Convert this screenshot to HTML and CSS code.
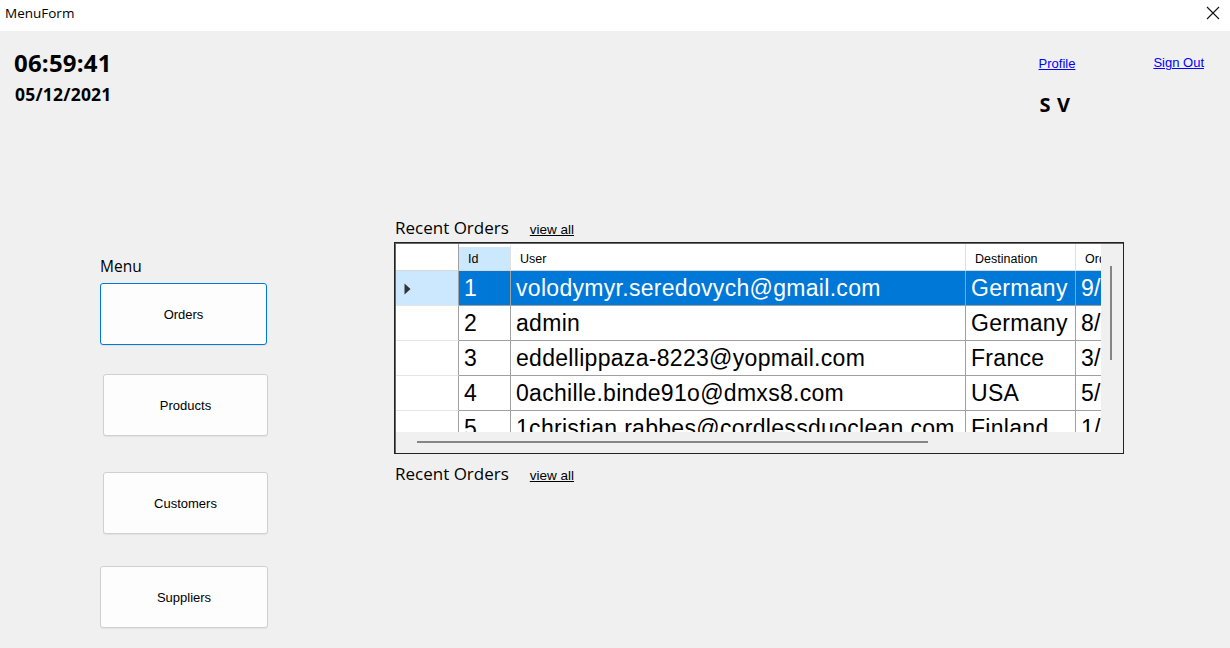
FILE: index.html
```html
<!DOCTYPE html>
<html>
<head>
<meta charset="utf-8">
<link rel="stylesheet" href="styles.css">
</head>
<body>
<div class="window">
  <div class="titlebar">
    <span class="title">MenuForm</span>
    <svg class="close" width="14" height="14" viewBox="0 0 14 14"><path d="M1 1L13 13M13 1L1 13" stroke="#111" stroke-width="1.1" fill="none"/></svg>
  </div>
  <div class="content">
    <div class="top">
      <div class="clock">
        <div class="time">06:59:41</div>
        <div class="date">05/12/2021</div>
      </div>
      <div class="user">
        <div class="profile-col">
          <a class="link" href="#">Profile</a>
          <div class="initials">S V</div>
        </div>
        <a class="link signout" href="#">Sign Out</a>
      </div>
    </div>
    <div class="body">
      <div class="menu">
        <div class="menu-label">Menu</div>
        <button class="btn btn-focus">Orders</button>
        <button class="btn b2">Products</button>
        <button class="btn b3">Customers</button>
        <button class="btn b4">Suppliers</button>
      </div>
      <div class="orders">
        <div class="section-head">
          <span class="section-title">Recent Orders</span>
          <a class="viewall" href="#">view all</a>
        </div>
        <div class="grid">
          <div class="grid-inner">
            <div class="table">
              <div class="row head">
                <div class="c rh"></div>
                <div class="c id sel-head">Id</div>
                <div class="c usr">User</div>
                <div class="c dest">Destination</div>
                <div class="c ord">Order</div>
              </div>
              <div class="row data selected">
                <div class="c rh rh-sel"><svg width="7" height="12" viewBox="0 0 7 12"><path d="M0.5 0.5L6.5 6L0.5 11.5Z" fill="#333"/></svg></div>
                <div class="c id">1</div>
                <div class="c usr">volodymyr.seredovych@gmail.com</div>
                <div class="c dest">Germany</div>
                <div class="c ord">9/12/2021</div>
              </div>
              <div class="row data">
                <div class="c rh"></div>
                <div class="c id">2</div>
                <div class="c usr">admin</div>
                <div class="c dest">Germany</div>
                <div class="c ord">8/12/2021</div>
              </div>
              <div class="row data">
                <div class="c rh"></div>
                <div class="c id">3</div>
                <div class="c usr">eddellippaza-8223@yopmail.com</div>
                <div class="c dest">France</div>
                <div class="c ord">3/12/2021</div>
              </div>
              <div class="row data">
                <div class="c rh"></div>
                <div class="c id">4</div>
                <div class="c usr">0achille.binde91o@dmxs8.com</div>
                <div class="c dest">USA</div>
                <div class="c ord">5/12/2021</div>
              </div>
              <div class="row data">
                <div class="c rh"></div>
                <div class="c id">5</div>
                <div class="c usr">1christian.rabbes@cordlessduoclean.com</div>
                <div class="c dest">Finland</div>
                <div class="c ord">1/12/2021</div>
              </div>
            </div>
            <div class="vscroll"><div class="vthumb"></div></div>
          </div>
          <div class="hscroll"><div class="hthumb"></div></div>
        </div>
        <div class="section-head second">
          <span class="section-title">Recent Orders</span>
          <a class="viewall" href="#">view all</a>
        </div>
      </div>
    </div>
  </div>
</div>
</body>
</html>
```

FILE: styles.css
```css
* { box-sizing: border-box; }
html, body { margin: 0; padding: 0; }
body { width: 1230px; height: 648px; overflow: hidden; background: #f0f0f0; }
.window { width: 1230px; height: 648px; display: flex; flex-direction: column; }
.titlebar {
  height: 31px; background: #fff; display: flex; align-items: center; justify-content: space-between;
  padding: 0 10px 0 5px;
}
.title { font-family: "Open Sans", sans-serif; font-size: 13.5px; color: #000; margin-top: -6px; }
.close { margin-top: -6px; }
.content { flex: 1; background: #f0f0f0; }
.top { display: flex; justify-content: space-between; height: 187px; }
.clock { padding: 16px 0 0 14px; font-family: "Open Sans", sans-serif; font-weight: 700; color: #000; }
.time { font-size: 24px; line-height: 32px; letter-spacing: 0.2px; }
.date { font-size: 17.5px; line-height: 24px; padding-left: 1px; letter-spacing: 0.2px; margin-top: 3px; }
.user { display: flex; padding: 24px 26px 0 0; }
.profile-col { display: flex; flex-direction: column; align-items: flex-start; }
.link { font-family: "Liberation Sans", Arial, sans-serif; font-size: 13px; color: #0000ff; text-decoration: underline; }
.profile-col .link { margin-top: 1px; }
.initials { font-family: "Open Sans", sans-serif; font-weight: 700; font-size: 20px; margin: 20px 0 0 1px; letter-spacing: 0.6px; }
.signout { margin-left: 78px; }
.body { display: flex; }
.menu { display: flex; flex-direction: column; align-items: flex-start; padding: 37px 0 0 99px; width: 394px; }
.menu-label { font-family: "Open Sans", sans-serif; font-size: 15.5px; line-height: 22px; margin: 0 0 6px 1px; color: #000; }
.btn {
  font-family: "Liberation Sans", Arial, sans-serif; font-size: 13px; color: #000;
  background: #fdfdfd; border: 1px solid #d0d0d0; border-radius: 3px; width: 165px; height: 62px;
  padding: 0; box-shadow: 0 1px 1px rgba(0,0,0,0.06);
}
.btn-focus { border: 1px solid #0078d7; width: 167px; margin-left: 1px; }
.b2 { margin: 29px 0 0 4px; }
.b3 { margin: 36px 0 0 4px; }
.b4 { margin: 32px 0 0 1px; width: 168px; }
.orders { padding-top: 0; width: 730px; }
.section-head { display: flex; align-items: baseline; height: 24px; }
.section-title { font-family: "Open Sans", sans-serif; font-size: 17px; color: #000; margin-left: 1px; margin-top: -2px; }
.viewall { font-family: "Liberation Sans", Arial, sans-serif; font-size: 13.5px; color: #000; text-decoration: underline; margin-left: 21px; }
.grid { border: 1px solid #222; box-shadow: inset 1px 1px 0 #666; width: 730px; height: 212px; background: #f0f0f0; display: flex; flex-direction: column; padding: 1px 0 0 1px; }
.grid-inner { display: flex; height: 188px; }
.table { width: 706px; background: #fff; overflow: hidden; height: 188px; }
.row { display: flex; height: 35px; }
.row.head { height: 27px; }
.c {
  flex: none; border-right: 1px solid #a0a0a0; border-bottom: 1px solid #a0a0a0; overflow: hidden; white-space: nowrap;
  font-family: "Liberation Sans", Arial, sans-serif; color: #000; display: flex; align-items: center;
}
.row.data .c { font-size: 23px; padding-left: 5px; padding-top: 1px; letter-spacing: 0.3px; }
.row.head .c { font-size: 12.5px; padding-left: 9px; border-bottom: 1px solid #d8d8d8; border-right: 1px solid #e0e0e0; align-items: flex-end; padding-bottom: 4px; }
.c.rh { width: 63px; border-right: 1px solid #a0a0a0; border-bottom: 1px solid #e6e6e6; }
.row.head .c.rh { border-right: 1px solid #a0a0a0; }
.row.data .c.rh { padding-left: 8px; }
.c.id { width: 52px; }
.c.usr { width: 455px; }
.c.dest { width: 110px; }
.c.ord { width: 30px; border-right: none; }
.sel-head { background: #cce8ff; }
.row.head .sel-head { border-top: 3px solid #fff; }
.rh-sel { background: #cce8ff; }
.row.selected .c:not(.rh) { background: #0078d7; color: #fff; }
.row.head .c.usr, .row.head .c.dest, .row.head .c.ord { padding-left: 9px; }
.vscroll { width: 22px; background: #f0f0f0; position: relative; }
.vthumb { position: absolute; left: 9px; top: 22px; width: 2px; height: 94px; background: #858585; }
.hscroll { height: 22px; position: relative; }
.hthumb { position: absolute; left: 21px; top: 9px; width: 511px; height: 2px; background: #858585; }
.second { margin-top: 10px; }
```
